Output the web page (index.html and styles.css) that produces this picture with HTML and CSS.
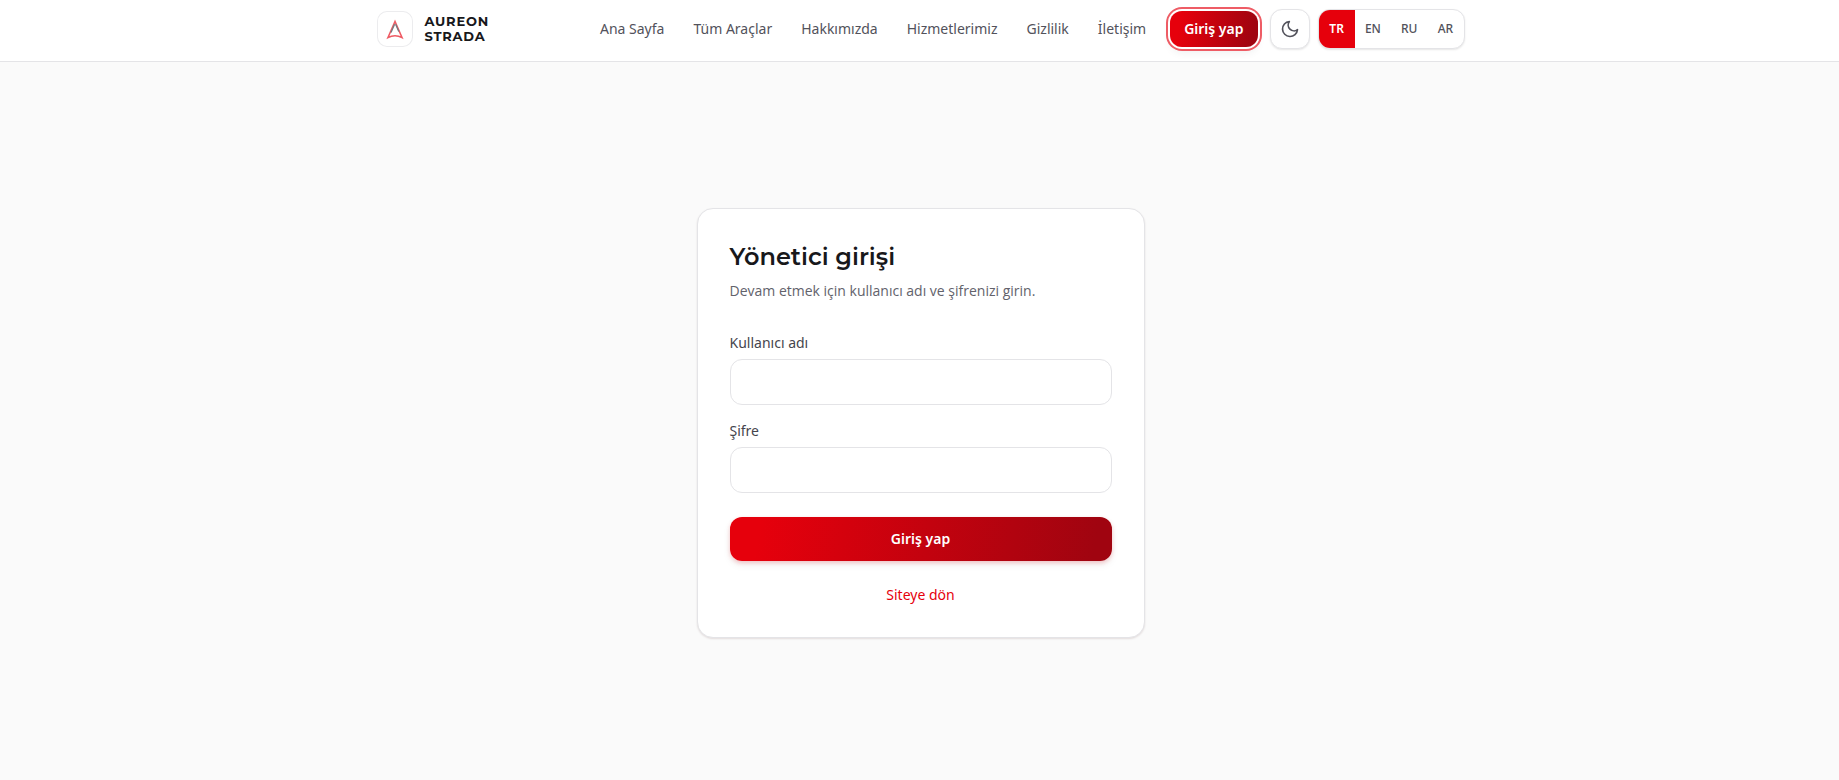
FILE: index.html
```html
<!DOCTYPE html>
<html lang="tr">
<head>
<meta charset="utf-8">
<meta name="viewport" content="width=device-width, initial-scale=1">
<title>Aureon Strada – Yönetici girişi</title>
<link rel="stylesheet" href="styles.css">
</head>
<body>
<header class="header">
  <div class="header-inner">
    <a class="brand" href="#">
      <span class="brand-mark">
        <svg viewBox="0 0 36 36" width="36" height="36" fill="none" aria-hidden="true">
          <path d="M18 10.5 11 26.5q7-3.4 14 0Z" stroke="#ee5a63" stroke-width="1.6" stroke-linejoin="miter"/>
          <path d="M17.6 13.2 14 21.6M18.6 13.2l3.2 7.4" stroke="#737a80" stroke-width="1.3"/>
        </svg>
      </span>
      <span class="brand-name">AUREON<br>STRADA</span>
    </a>
    <div class="header-end">
      <nav class="nav">
        <a href="#">Ana Sayfa</a>
        <a href="#">Tüm Araçlar</a>
        <a href="#">Hakkımızda</a>
        <a href="#">Hizmetlerimiz</a>
        <a href="#">Gizlilik</a>
        <a href="#">İletişim</a>
      </nav>
      <div class="tools">
        <a class="login-link" href="#">Giriş yap</a>
        <button class="theme" type="button" aria-label="Koyu tema">
          <svg viewBox="0 0 24 24" width="20" height="20" fill="none" stroke="currentColor" stroke-width="2" stroke-linecap="round" stroke-linejoin="round" aria-hidden="true"><path d="M21 12.79A9 9 0 1 1 11.21 3 7 7 0 0 0 21 12.79z"/></svg>
        </button>
        <div class="langs" role="group" aria-label="Dil">
          <button class="active" type="button">TR</button>
          <button type="button">EN</button>
          <button type="button">RU</button>
          <button type="button">AR</button>
        </div>
      </div>
    </div>
  </div>
</header>
<main class="main">
  <form class="card">
    <h1>Yönetici girişi</h1>
    <p class="lead">Devam etmek için kullanıcı adı ve şifrenizi girin.</p>
    <div class="fields">
      <div class="field">
        <label for="user">Kullanıcı adı</label>
        <input id="user" type="text" autocomplete="username">
      </div>
      <div class="field">
        <label for="pass">Şifre</label>
        <input id="pass" type="password" autocomplete="current-password">
      </div>
    </div>
    <button class="submit" type="submit">Giriş yap</button>
    <a class="back" href="#">Siteye dön</a>
  </form>
</main>
</body>
</html>
```
FILE: styles.css
```css
*, *::before, *::after { box-sizing: border-box; }
body {
  margin: 0;
  min-height: 100vh;
  display: flex;
  flex-direction: column;
  background: #fafafa;
  color: #18181b;
  font: 14px/20px "Noto Sans", sans-serif;
}
a { color: inherit; text-decoration: none; }
button { border: 0; padding: 0; font: inherit; cursor: pointer; }
h1, p { margin: 0; }

.header { background: #fff; border-bottom: 1px solid #e4e4e7; padding: 9px 32px 12px 34px; }
.header-inner {
  max-width: 1088px;
  margin: 0 auto;
  display: flex;
  align-items: center;
  justify-content: space-between;
}
.brand { display: flex; align-items: center; gap: 12px; }
.brand-mark {
  width: 36px;
  height: 36px;
  border-radius: 10px;
  background: #fff;
  box-shadow: inset 0 0 0 1px #ececee;
}
.brand-mark svg { display: block; }
.brand-name { font: 700 13px/15px Montserrat, Inter, sans-serif; letter-spacing: 0.06em; }
.header-end { display: flex; align-items: center; gap: 24px; }
.nav { display: flex; gap: 29px; color: #52525b; }
.tools { display: flex; align-items: center; }
.login-link {
  padding: 8px 14px;
  border-radius: 12px;
  background: linear-gradient(100deg, #e6000c 12%, #a00410 92%);
  color: #fff;
  font-weight: 600;
  box-shadow: 0 0 0 2px #fff, 0 0 0 4px #ee5c65, 0 6px 8px rgba(0, 0, 0, .06);
}
.theme {
  width: 40px;
  height: 40px;
  margin: 0 8px 0 12px;
  display: grid;
  place-items: center;
  background: #fff;
  border: 1px solid #e4e4e7;
  border-radius: 12px;
  color: #52525b;
  box-shadow: 0 1px 2px rgba(0, 0, 0, .1);
}
.langs {
  display: flex;
  width: 147px;
  height: 40px;
  overflow: hidden;
  background: #fff;
  border: 1px solid #e4e4e7;
  border-radius: 12px;
  box-shadow: 0 1px 2px rgba(0, 0, 0, .1);
}
.langs button { flex: 1; background: none; color: #52525b; font-size: 12px; font-weight: 500; }
.langs .active { background: #e6000c; color: #fff; font-weight: 600; }

.main { flex: 1; display: grid; place-items: center; padding: 68px 16px 64px 18px; }
.card {
  width: 100%;
  max-width: 448px;
  padding: 32px;
  display: flex;
  flex-direction: column;
  background: #fff;
  border: 1px solid #e4e4e7;
  border-radius: 16px;
  box-shadow: 0 1px 2px rgba(60, 0, 10, .12);
}
.card h1 { font: 600 24px/32px Montserrat, Inter, sans-serif; }
.lead { margin-top: 8px; color: #62626b; font-family: "Open Sans", "Noto Sans", sans-serif; }
.fields { margin-top: 32px; display: grid; gap: 16px; }
.field { display: grid; gap: 6px; }
.field label { color: #45454d; }
.field input {
  width: 100%;
  height: 46px;
  padding: 0 16px;
  border: 1px solid #e4e4e7;
  border-radius: 12px;
  background: #fff;
  font: inherit;
}
.submit {
  margin-top: 24px;
  height: 44px;
  border-radius: 12px;
  background: linear-gradient(100deg, #e6000c 8%, #a00410 95%);
  color: #fff;
  font-weight: 600;
  box-shadow: 0 2px 4px rgba(232, 0, 13, .2), 0 4px 8px rgba(0, 0, 0, .06);
}
.back { margin-top: 24px; align-self: center; color: #e6000c; }
```
